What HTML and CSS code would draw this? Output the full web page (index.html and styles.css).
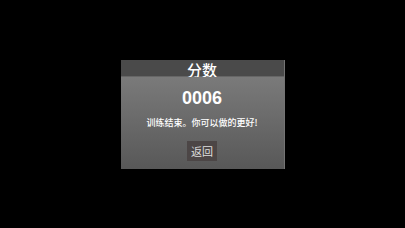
FILE: index.html
```html
<!DOCTYPE html>
<html>
<head>
<meta charset="utf-8">
<link rel="stylesheet" href="styles.css">
</head>
<body>
<div class="dialog">
  <div class="dialog-header">分数</div>
  <div class="dialog-body">
    <div class="score">0006</div>
    <div class="message">训练结束。你可以做的更好!</div>
    <button class="back-btn">返回</button>
  </div>
</div>
</body>
</html>
```
FILE: styles.css
```css
html, body {
  margin: 0;
  padding: 0;
  background: #000;
  height: 100%;
}
body {
  display: flex;
  align-items: center;
  justify-content: center;
  font-family: "Liberation Sans", "Noto Sans CJK SC", sans-serif;
}
.dialog {
  width: 164px;
  height: 109px;
  display: flex;
  flex-direction: column;
  border-right: 1px solid #747474;
  box-sizing: border-box;
}
.dialog-header {
  height: 16px;
  background: #4a4a4a;
  color: #fff;
  font-family: "Noto Sans CJK SC", sans-serif;
  font-weight: 500;
  font-size: 15px;
  line-height: 19px;
  text-align: center;
  border-bottom: 1px solid #666;
}
.dialog-body {
  flex: 1;
  background: linear-gradient(#7a7a7a, #585858);
  display: flex;
  flex-direction: column;
  align-items: center;
}
.score {
  margin-top: 12px;
  font-size: 18px;
  font-weight: bold;
  color: #fff;
  line-height: 18px;
}
.message {
  margin-top: 11px;
  font-family: "Noto Sans CJK SC", sans-serif;
  font-weight: 500;
  font-size: 9px;
  color: #fff;
  line-height: 10px;
}
.back-btn {
  margin-top: 13px;
  width: 30px;
  height: 20px;
  padding: 0;
  border: none;
  background: #4c4646;
  color: #ddd;
  font-family: "Noto Sans CJK SC", sans-serif;
  font-size: 11px;
  line-height: 20px;
}
```
